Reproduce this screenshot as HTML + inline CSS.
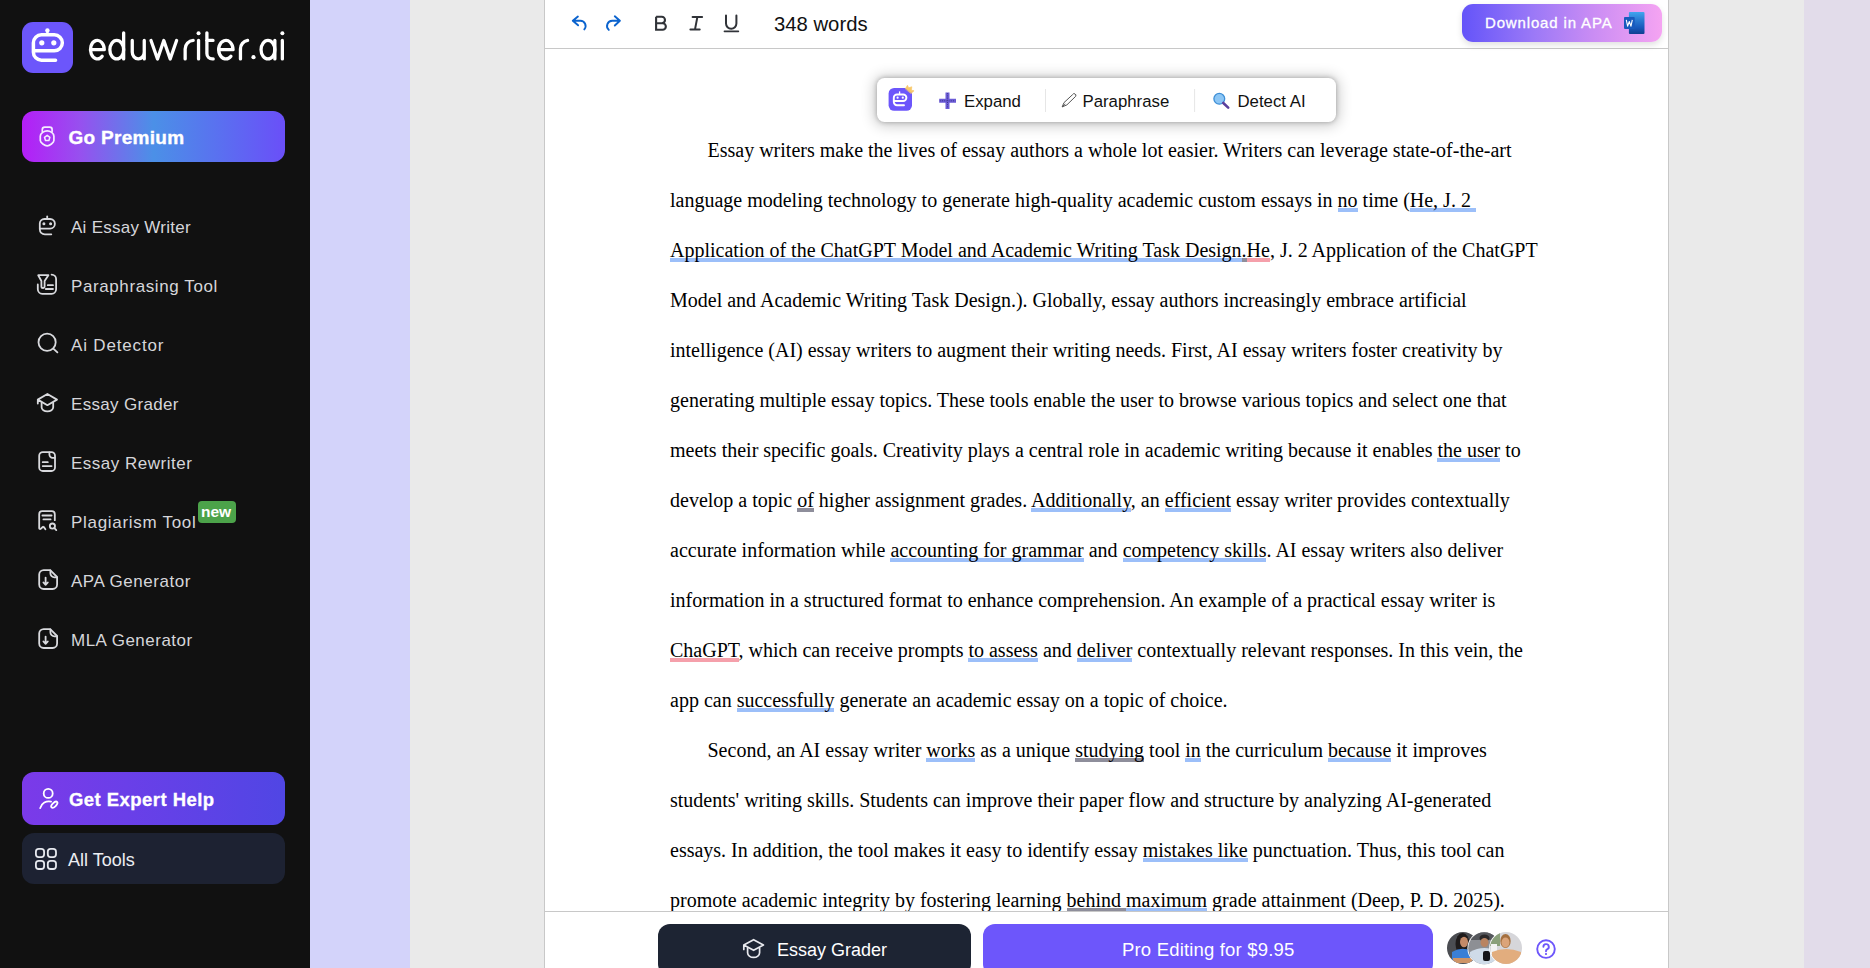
<!DOCTYPE html>
<html><head><meta charset="utf-8">
<style>
*{margin:0;padding:0;box-sizing:border-box}
html,body{width:1870px;height:968px;overflow:hidden;background:#eaeaea;font-family:"Liberation Sans",sans-serif}
.abs{position:absolute}
#side{position:absolute;left:0;top:0;width:310px;height:968px;background:#111111}
#lav{position:absolute;left:310px;top:0;width:100px;height:968px;background:#d3d3fa}
#lav2{position:absolute;left:1804px;top:0;width:66px;height:968px;background:#e2dcea}
#ed{position:absolute;left:544px;top:0;width:1125px;height:968px;background:#fff;border-left:1px solid #c8c8c8;border-right:1px solid #c8c8c8}
#tb{position:absolute;left:545px;top:48px;width:1123px;height:1px;background:#c8c8c8}
#bb{position:absolute;left:545px;top:911px;width:1123px;height:1px;background:#c8c8c8}
.nav{position:absolute;left:71px;font-size:17px;letter-spacing:0.25px;color:#d6d6da;line-height:20px;white-space:nowrap}
.ico{position:absolute;left:36px;width:24px;height:24px}
#doc{position:absolute;left:670px;top:0;font-family:"Liberation Serif",serif;font-size:20px;line-height:50px;color:#000;white-space:nowrap}
#doc div{position:absolute;left:0}
.u{background:linear-gradient(#9cbff9,#9cbff9) no-repeat left bottom/100% 4px;padding-bottom:1px}
.r{background:linear-gradient(#f5a0ab,#f5a0ab) no-repeat left bottom/100% 4px;padding-bottom:1px}
.g{background:linear-gradient(#8e8e9b,#8e8e9b) no-repeat left bottom/100% 4px;padding-bottom:1px}
</style></head><body>
<div id="side">
<div class="abs" style="left:22px;top:22px;width:51px;height:51px;border-radius:11px;background:#6c56fb"></div>
<div class="abs" style="left:22px;top:111px;width:263px;height:51px;border-radius:12px;background:linear-gradient(90deg,#b41ef7 0%,#9750ef 22%,#4b90e7 50%,#5a70f0 75%,#6a4ff8 100%)"></div>
<div class="abs" style="left:68.5px;top:126px;font-size:19px;font-weight:bold;color:#fff;line-height:24px;letter-spacing:0.3px;-webkit-text-stroke:0.35px #fff">Go Premium</div>
<div class="nav" style="top:218px;letter-spacing:0.27px">Ai Essay Writer</div>
<div class="nav" style="top:277px;letter-spacing:0.6px">Paraphrasing Tool</div>
<div class="nav" style="top:336px;letter-spacing:0.83px">Ai Detector</div>
<div class="nav" style="top:395px;letter-spacing:0.31px">Essay Grader</div>
<div class="nav" style="top:454px;letter-spacing:0.5px">Essay Rewriter</div>
<div class="nav" style="top:513px;letter-spacing:0.7px">Plagiarism Tool</div>
<div class="abs" style="left:197.5px;top:501px;width:38px;height:22px;border-radius:4px;background:#4ca34a"></div>
<div class="abs" style="left:201px;top:503px;width:30px;font-size:15.5px;font-weight:bold;color:#fff;line-height:18px;text-align:center">new</div>
<div class="nav" style="top:572px;letter-spacing:0.52px">APA Generator</div>
<div class="nav" style="top:631px;letter-spacing:0.49px">MLA Generator</div>
<div class="abs" style="left:22px;top:772px;width:263px;height:53px;border-radius:12px;background:linear-gradient(90deg,#7b3ae9 0%,#6a3fe8 40%,#5046e4 100%)"></div>
<div class="abs" style="left:69px;top:789px;font-size:18.5px;font-weight:bold;color:#fff;line-height:22px;letter-spacing:0.45px;-webkit-text-stroke:0.3px #fff">Get Expert Help</div>
<div class="abs" style="left:22px;top:833px;width:263px;height:51px;border-radius:12px;background:#1d2232"></div>
<div class="abs" style="left:68px;top:849px;font-size:18px;color:#eceef2;line-height:22px">All Tools</div>
<svg class="abs" style="left:0;top:0" width="310" height="968" viewBox="0 0 310 968" fill="none" stroke-linecap="round" stroke-linejoin="round">
 <g stroke="#fff" stroke-width="3.5">
  <path d="M55.55 60.15 H41.4 A8 8 0 0 1 33.4 52.15 V42.85 A8 8 0 0 1 41.4 34.85 H54.35 A8 8 0 0 1 54.35 50.85 H33.4"/>
  <path d="M47.4 30.5 V34" stroke-width="2.4"/>
 </g>
 <g fill="#fff"><circle cx="47.4" cy="30.5" r="2.2"/><circle cx="41.8" cy="42.8" r="2.6"/><circle cx="53.8" cy="42.8" r="2.6"/></g>
 <g stroke="#fff" stroke-width="3.3">
  <path d="M104.25 49.7 H90.45 M104.25 49.7 A6.9 9.25 0 1 0 102.2 56.2"/>
  <ellipse cx="116.75" cy="49.7" rx="6.9" ry="9.25"/><path d="M123.65 32.85 V58.95"/>
  <path d="M132.25 40.45 V52 A6 6.95 0 0 0 144.25 52 M144.25 40.45 V58.95"/>
  <path d="M151 40.45 L157.5 58.95 L163.8 40.45 L170.2 58.95 L176.6 40.45"/>
  <path d="M185.15 58.95 V49 A8.5 8.5 0 0 1 193.2 40.45"/>
  <path d="M198.55 40.45 V58.95"/>
  <path d="M206.9 32.85 V53.5 A5.45 5.45 0 0 0 212.35 58.95 H213.2 M206.6 40.45 H213"/>
  <path d="M233.05 49.7 H218.65 M233.05 49.7 A7.2 9.25 0 1 0 230.95 56.2"/>
  <path d="M240.45 58.95 V49 A8.5 8.5 0 0 1 247.6 40.45"/>
  <ellipse cx="267.95" cy="49.7" rx="6.9" ry="9.25"/><path d="M274.85 40.45 V58.95"/>
  <path d="M282.35 40.45 V58.95"/>
 </g>
 <g fill="#fff"><circle cx="198.55" cy="33.3" r="2"/><circle cx="253.5" cy="57.2" r="2.1"/><circle cx="282.35" cy="33.3" r="2"/></g>
 <g stroke="#f4ecff" stroke-width="1.7">
  <path d="M42.3 131.5 V129.6 A2.4 2.4 0 0 1 44.7 127.2 H49.7 A2.4 2.4 0 0 1 52.1 129.6 V131.5"/>
  <path d="M47.2 130.8 C50.2 130.8 53.9 133.2 53.9 136.2 V140.6 C53.9 142.6 49.6 145.8 47.2 145.8 C44.8 145.8 40.3 142.6 40.3 140.6 V136.2 C40.3 133.2 44.2 130.8 47.2 130.8 Z"/>
  <path d="M47.2 135.3 L49.9 137.3 L48.9 140.5 L45.5 140.5 L44.5 137.3 Z" stroke-width="1.5"/>
 </g>
 <g stroke="#d9dade" stroke-width="1.8">
  <path d="M51.3 234.3 H44.8 A5 5 0 0 1 39.8 229.3 V223.5 A4.5 4.5 0 0 1 44.3 219 H50.1 A4.8 4.8 0 0 1 50.1 228.6 H39.8"/>
  <path d="M47.2 216.5 V219"/>
  <circle cx="43.9" cy="223.8" r="0.9" stroke-width="1.2" fill="#d9dade"/><circle cx="50.6" cy="223.8" r="0.9" stroke-width="1.2" fill="#d9dade"/>
  <path d="M38.2 275.2 H48.4 L44.6 281 V286.4 A1.6 1.6 0 0 1 41.4 286.4 V281 Z"/>
  <path d="M51.6 274.6 A4.5 4.5 0 0 1 56.1 279.1 V289.3 A4.5 4.5 0 0 1 51.6 293.8 H42.3 A4.5 4.5 0 0 1 37.8 289.3 V284.4"/>
  <path d="M47.8 285.2 H53 M45.8 289 H53"/>
  <circle cx="47.1" cy="342.3" r="8.6"/><path d="M53.6 348.8 L57.4 352.4"/>
  <path d="M37.8 399.6 L47.4 394 L57 399.6 L47.4 405.2 Z M37.8 399.6 V403.5"/>
  <path d="M41.6 402.6 V407.2 A5.8 4.2 0 0 0 53.2 407.2 V402.6"/>
  <rect x="39.2" y="452.1" width="15.8" height="18.9" rx="3.6"/>
  <path d="M49.4 452.4 V454.6 A3.2 3.2 0 0 0 52.6 457.8 H54.8"/>
  <path d="M42.7 462.2 H47.8 M42.7 466.1 H51.6"/>
  <path d="M54.8 520.2 V514.2 A3 3 0 0 0 51.8 511.2 H42.2 A3 3 0 0 0 39.2 514.2 V528.2 A0.9 0.9 0 0 0 40.7 528.8 L42.7 527 A0.8 0.8 0 0 1 43.9 527.1 L45.4 529.2"/>
  <path d="M42.4 515.5 H51.6 M43.4 519.4 H50.6"/>
  <circle cx="52.4" cy="526.1" r="2.6"/><path d="M54.4 528.2 L56.3 530.1"/>
 </g>
 <g id="apa" stroke="#d9dade" stroke-width="1.8">
  <path d="M50.2 570.1 H43.7 A4.5 4.5 0 0 0 39.2 574.6 V584.5 A4.5 4.5 0 0 0 43.7 589 H52.6 A4.5 4.5 0 0 0 57.1 584.5 V577 Z"/>
  <path d="M50.4 570.4 V573.2 A4.1 4.1 0 0 0 54.5 577.3 H56.8"/>
  <path d="M45.6 577.6 V584.8 M43.4 582.5 L45.6 584.8 L47.8 582.5"/>
 </g>
 <use href="#apa" y="59"/>
 <g stroke="#fff" stroke-width="1.8">
  <circle cx="48.2" cy="793.4" r="4.5"/>
  <path d="M40.2 808.1 A9 9 0 0 1 51.1 801.6"/>
  <ellipse cx="54.3" cy="804.7" rx="3.9" ry="1.9" transform="rotate(-45 54.3 804.7)"/>
 </g>
 <g stroke="#e6e8ee" stroke-width="1.8">
  <rect x="35.9" y="848.9" width="8.2" height="8.2" rx="2.8"/><rect x="47.8" y="848.9" width="8.2" height="8.2" rx="2.8"/>
  <rect x="35.9" y="860.8" width="8.2" height="8.2" rx="2.8"/><rect x="47.8" y="860.8" width="8.2" height="8.2" rx="2.8"/>
 </g>
</svg>
</div>

<div id="lav"></div>
<div id="lav2"></div>
<div id="ed"></div>
<div id="tb"></div>
<div id="doc">
<div style="top:125px;left:37.5px">Essay writers make the lives of essay authors a whole lot easier. Writers can leverage state-of-the-art</div>
<div style="top:175px">language modeling technology to generate high-quality academic custom essays in <span class="u">no</span> time (<span class="u">He, J. 2&nbsp;</span></div>
<div style="top:225px"><span class="u">Application of the ChatGPT Model and Academic Writing Task Design</span><span class="g">.</span><span class="r">He</span>, J. 2 Application of the ChatGPT</div>
<div style="top:275px">Model and Academic Writing Task Design.). Globally, essay authors increasingly embrace artificial</div>
<div style="top:325px">intelligence (AI) essay writers to augment their writing needs. First, AI essay writers foster creativity by</div>
<div style="top:375px">generating multiple essay topics. These tools enable the user to browse various topics and select one that</div>
<div style="top:425px">meets their specific goals. Creativity plays a central role in academic writing because it enables <span class="u">the user</span> to</div>
<div style="top:475px">develop a topic <span class="g">of</span> higher assignment grades. <span class="u">Additionally</span>, an <span class="u">efficient</span> essay writer provides contextually</div>
<div style="top:525px">accurate information while <span class="u">accounting for grammar</span> and <span class="u">competency skills</span>. AI essay writers also deliver</div>
<div style="top:575px">information in a structured format to enhance comprehension. An example of a practical essay writer is</div>
<div style="top:625px"><span class="r">ChaGPT</span>, which can receive prompts <span class="u">to assess</span> and <span class="u">deliver</span> contextually relevant responses. In this vein, the</div>
<div style="top:675px">app can <span class="u">successfully</span> generate an academic essay on a topic of choice.</div>
<div style="top:725px;left:37.5px">Second, an AI essay writer <span class="u">works</span> as a unique <span class="g">studying</span> tool <span class="u">in</span> the curriculum <span class="u">because</span> it improves</div>
<div style="top:775px">students' writing skills. Students can improve their paper flow and structure by analyzing AI-generated</div>
<div style="top:825px">essays. In addition, the tool makes it easy to identify essay <span class="u">mistakes like</span> punctuation. Thus, this tool can</div>
<div style="top:875px">promote academic integrity by fostering learning <span class="g">behind </span><span class="u">maximum</span> grade attainment (Deep, P. D. 2025).</div>
<div style="top:925px">A second line of hidden text continues below the editing bar of the document area here.</div>
</div>

<div id="bb"></div>
<div class="abs" style="left:545px;top:912px;width:1123px;height:56px;background:#fff"></div>
<div class="abs" style="left:658px;top:924px;width:312.5px;height:52px;border-radius:12px;background:#1d2433"></div>
<svg class="abs" style="left:740px;top:936px" width="28" height="26" viewBox="740 936 28 26" fill="none" stroke="#e8e9ee" stroke-width="1.7" stroke-linecap="round" stroke-linejoin="round">
 <path d="M743.8 945 L753.6 939.7 L763.4 945 L753.6 950.3 Z M743.8 945 V949.5"/>
 <path d="M747.6 948 V952.8 A6 4.6 0 0 0 759.6 952.8 V948"/>
</svg>
<div class="abs" style="left:777px;top:940px;font-size:18px;line-height:21px;color:#fff">Essay Grader</div>
<div class="abs" style="left:983px;top:924px;width:449.5px;height:52px;border-radius:12px;background:#6d56fb"></div>
<div class="abs" style="left:1122px;top:939px;font-size:18.5px;line-height:22px;color:#fff;letter-spacing:0.18px">Pro Editing for $9.95</div>
<svg class="abs" style="left:1440px;top:926px" width="90" height="42" viewBox="1440 926 90 42">
 <defs>
  <clipPath id="c1"><circle cx="1463" cy="948" r="16"/></clipPath>
  <clipPath id="c2"><circle cx="1484.2" cy="948.2" r="16"/></clipPath>
  <clipPath id="c3"><circle cx="1506" cy="948" r="16"/></clipPath>
 </defs>
 <g clip-path="url(#c1)">
  <rect x="1440" y="926" width="50" height="42" fill="#4b4d52"/>
  <ellipse cx="1462.5" cy="944" rx="7" ry="11" fill="#1f1b1b"/>
  <ellipse cx="1464" cy="942" rx="4" ry="5.2" fill="#c48a68"/>
  <path d="M1452 952 Q1462 946 1471 951 L1472 962 L1452 962 Z" fill="#3a7fd6"/>
  <rect x="1453" y="958" width="19" height="5" fill="#cf9466"/>
 </g>
 <circle cx="1484.2" cy="948.2" r="16.8" fill="#fff"/>
 <g clip-path="url(#c2)">
  <rect x="1460" y="926" width="50" height="42" fill="#8d8f94"/>
  <rect x="1466" y="932" width="36" height="8" fill="#55575c"/>
  <ellipse cx="1484.5" cy="938" rx="5" ry="3.6" fill="#2a2829"/>
  <ellipse cx="1484.5" cy="942.5" rx="4" ry="4.6" fill="#b98462"/>
  <path d="M1470 952 Q1484 944 1499 952 L1500 966 L1470 966 Z" fill="#cfdbe8"/>
  <rect x="1483" y="951" width="7" height="10" rx="2" fill="#141418"/>
 </g>
 <circle cx="1506" cy="948" r="16.8" fill="#fff"/>
 <g clip-path="url(#c3)">
  <rect x="1488" y="926" width="42" height="42" fill="#d6d6da"/>
  <rect x="1490" y="932" width="10" height="14" fill="#8aa07a"/>
  <rect x="1491" y="944" width="6" height="10" fill="#f2f2f2"/>
  <ellipse cx="1505.5" cy="941" rx="5.2" ry="7" fill="#a5703f"/>
  <ellipse cx="1505.5" cy="942.5" rx="4" ry="5" fill="#dba47a"/>
  <path d="M1492 952 Q1506 946 1521 952 L1522 966 L1492 966 Z" fill="#e2ad7e"/>
 </g>
</svg>
<svg class="abs" style="left:1534px;top:937px" width="24" height="24" viewBox="1534 937 24 24" fill="none" stroke="#6d56fb" stroke-width="1.9" stroke-linecap="round">
 <circle cx="1546" cy="949.1" r="8.8"/>
 <path d="M1543.4 946.8 A2.7 2.7 0 1 1 1547 949.4 C1546.2 949.8 1546 950.3 1546 951.3"/>
 <circle cx="1546" cy="954" r="0.5" fill="#6d56fb" stroke-width="1.2"/>
</svg>

<svg class="abs" style="left:545px;top:0" width="1123" height="48" viewBox="545 0 1123 48" fill="none" stroke-linecap="round" stroke-linejoin="round">
 <g stroke="#0b63ce" stroke-width="1.9">
  <path d="M577.9 16.5 L572.8 20.8 L578.1 25.3 M572.8 20.8 H580.2 A5.2 5.2 0 0 1 584.3 29.4"/>
  <path d="M614.8 16.3 L619.9 20.8 L614.8 25.5 M619.9 20.8 H612.3 A5.2 5.2 0 0 0 608.8 29.9"/>
 </g>
 <g stroke="#303338" stroke-width="2.1" stroke-linecap="butt" stroke-linejoin="miter">
  <path d="M656.1 16.8 V29.7 H662.6 A3.25 3.25 0 0 0 662.6 23.2 H656.1 M656.1 16.8 H661.8 A3.2 3.2 0 0 1 661.8 23.2"/>
 </g>
 <g stroke="#303338" stroke-width="2">
  <path d="M692.6 16.9 H702.1 M690.4 29.4 H699.7 M697.4 16.9 L695 29.4"/>
  <path d="M726 15.5 V23.6 A5.2 5.2 0 0 0 736.4 23.6 V15.5"/>
  <path d="M724.4 31.4 H738.4" stroke-width="1.6"/>
 </g>
</svg>
<div class="abs" style="left:774px;top:11.5px;font-size:20.3px;line-height:24px;color:#111">348 words</div>
<div class="abs" style="left:1462px;top:4px;width:200px;height:38px;border-radius:11px;background:linear-gradient(90deg,#6454f9 0%,#9a78f7 35%,#c98cf4 65%,#f5a4f2 100%);box-shadow:0 3px 6px rgba(0,0,0,0.12)"></div>
<div class="abs" style="left:1485px;top:14px;font-size:15px;line-height:18px;color:#fff;letter-spacing:0.85px;-webkit-text-stroke:0.3px #fff">Download in APA</div>
<svg class="abs" style="left:1620px;top:8px" width="30" height="30" viewBox="1620 8 30 30">
 <defs><linearGradient id="wg" x1="0" y1="0" x2="0" y2="1"><stop offset="0" stop-color="#41a5ee"/><stop offset="0.35" stop-color="#2b7cd3"/><stop offset="0.7" stop-color="#185abd"/><stop offset="1" stop-color="#103f91"/></linearGradient></defs>
 <rect x="1628.9" y="12" width="15.6" height="21.9" rx="1" fill="url(#wg)"/>
 <rect x="1624" y="17.1" width="10.7" height="11.8" rx="0.8" fill="#185abd"/>
 <path d="M1626.3 19.8 L1627.6 26.2 L1629.3 21.5 L1631 26.2 L1632.3 19.8" stroke="#fff" stroke-width="1.1" fill="none" stroke-linejoin="round"/>
</svg>
<div class="abs" style="left:877px;top:78px;width:459px;height:44px;border-radius:7.5px;background:#fff;box-shadow:0 0 5px rgba(0,0,0,0.28),0 1px 14px 3px rgba(0,0,0,0.2)"></div>
<svg class="abs" style="left:877px;top:78px" width="459" height="44" viewBox="877 78 459 44" fill="none" stroke-linecap="round" stroke-linejoin="round">
 <rect x="888.6" y="88" width="23.4" height="22.8" rx="5.5" fill="#6c56fb"/>
 <path d="M904 105.2 H897 A3.2 3.2 0 0 1 893.8 102 V97.7 A3.2 3.2 0 0 1 897 94.5 H903.15 A3.25 3.25 0 0 1 903.15 101 H893.8" stroke="#fff" stroke-width="1.9"/>
 <path d="M899.6 91.8 V94.2" stroke="#fff" stroke-width="1.3"/>
 <circle cx="897.6" cy="97.7" r="1.1" fill="#fff"/><circle cx="902.8" cy="97.7" r="1.1" fill="#fff"/>
 <path d="M905.25 91.25 L904.7 87.5 L907.2 88.7 L909 85.85 L910.8 88.7 L913.3 87.5 L912.75 91.25 Z" fill="#f8c86a" stroke="#f8c86a" stroke-width="0.6" transform="translate(0.8 0.2) rotate(40 909 89)"/>
 <path d="M947.5 92.6 V109 M939.2 100.8 H956" stroke="#6b5bd6" stroke-width="4" stroke-linecap="butt"/>
 <path d="M947.5 93.2 V108.4 M939.8 100.8 H955.4" stroke="#3f3a8e" stroke-width="1" stroke-dasharray="1 1.2" stroke-linecap="butt"/>
 <path d="M1045.5 89 V112 M1194.6 89 V112" stroke="#e6e6e6" stroke-width="1" stroke-linecap="butt"/>
 <path d="M1062.3 106.6 L1064 102.6 L1072.6 94.6 A1.6 1.6 0 0 1 1075.7 96.3 L1067.2 104.6 Z M1062.3 106.6 L1065 104.3" stroke="#555" stroke-width="1" fill="#fff"/>
 <circle cx="1219.3" cy="98.8" r="5.4" fill="#8cc6f5" stroke="#3e8fd6" stroke-width="1.3"/>
 <path d="M1223.3 103 L1228.2 107.6" stroke="#5a3f9c" stroke-width="2.6"/>
</svg>
<div class="abs" style="left:964px;top:92px;font-size:16.8px;line-height:19px;color:#111">Expand</div>
<div class="abs" style="left:1082.5px;top:92px;font-size:16.8px;line-height:19px;color:#111">Paraphrase</div>
<div class="abs" style="left:1237.5px;top:92px;font-size:16.8px;line-height:19px;color:#111">Detect AI</div>

</body></html>
